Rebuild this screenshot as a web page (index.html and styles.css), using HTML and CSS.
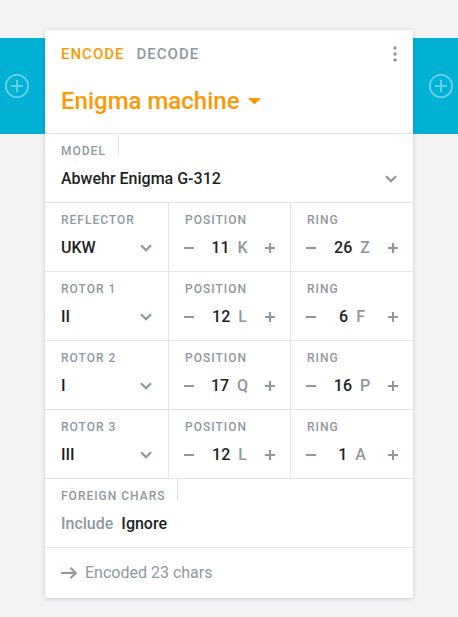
FILE: index.html
```html
<!DOCTYPE html>
<html lang="en">
<head>
<meta charset="utf-8">
<title>Enigma machine</title>
<link rel="stylesheet" href="styles.css">
</head>
<body>
<svg class="defs" width="0" height="0">
  <symbol id="add" viewBox="0 0 24 24"><circle cx="12" cy="12" r="11.2"/><path d="M12 6v12M6 12h12"/></symbol>
  <symbol id="chevron" viewBox="0 0 12 8"><path d="M1 1.2l5 5 5-5"/></symbol>
  <symbol id="minus" viewBox="0 0 10 10"><path d="M0 5h10"/></symbol>
  <symbol id="plus" viewBox="0 0 10 10"><path d="M0 5h10M5 0v10"/></symbol>
</svg>
<div class="pipe">
  <div class="gutter"><svg class="add"><use href="#add"/></svg></div>
  <main class="card">
    <header class="head">
      <nav class="tabs">
        <span class="tab active">ENCODE</span><span class="tab">DECODE</span>
        <svg class="more" viewBox="0 0 4 16"><circle cx="2" cy="2" r="1.8"/><circle cx="2" cy="8" r="1.8"/><circle cx="2" cy="14" r="1.8"/></svg>
      </nav>
      <h1 class="title">Enigma machine<svg class="caret" viewBox="0 0 13 7"><path d="M0 0h13L6.500 6.500z"/></svg></h1>
    </header>
    <section class="row">
      <div class="field"><span class="label ticked">MODEL</span><div class="select">Abwehr Enigma G-312<svg class="chevron"><use href="#chevron"/></svg></div></div>
    </section>
    <section class="row">
      <div class="field"><span class="label">REFLECTOR</span><div class="select">UKW<svg class="chevron"><use href="#chevron"/></svg></div></div>
      <div class="field"><span class="label">POSITION</span><div class="stepper"><svg class="step"><use href="#minus"/></svg><span class="value">11<i>K</i></span><svg class="step"><use href="#plus"/></svg></div></div>
      <div class="field"><span class="label">RING</span><div class="stepper"><svg class="step"><use href="#minus"/></svg><span class="value">26<i>Z</i></span><svg class="step"><use href="#plus"/></svg></div></div>
    </section>
    <section class="row">
      <div class="field"><span class="label">ROTOR 1</span><div class="select">II<svg class="chevron"><use href="#chevron"/></svg></div></div>
      <div class="field"><span class="label">POSITION</span><div class="stepper"><svg class="step"><use href="#minus"/></svg><span class="value">12<i>L</i></span><svg class="step"><use href="#plus"/></svg></div></div>
      <div class="field"><span class="label">RING</span><div class="stepper"><svg class="step"><use href="#minus"/></svg><span class="value">6<i>F</i></span><svg class="step"><use href="#plus"/></svg></div></div>
    </section>
    <section class="row">
      <div class="field"><span class="label">ROTOR 2</span><div class="select">I<svg class="chevron"><use href="#chevron"/></svg></div></div>
      <div class="field"><span class="label">POSITION</span><div class="stepper"><svg class="step"><use href="#minus"/></svg><span class="value">17<i>Q</i></span><svg class="step"><use href="#plus"/></svg></div></div>
      <div class="field"><span class="label">RING</span><div class="stepper"><svg class="step"><use href="#minus"/></svg><span class="value">16<i>P</i></span><svg class="step"><use href="#plus"/></svg></div></div>
    </section>
    <section class="row">
      <div class="field"><span class="label">ROTOR 3</span><div class="select">III<svg class="chevron"><use href="#chevron"/></svg></div></div>
      <div class="field"><span class="label">POSITION</span><div class="stepper"><svg class="step"><use href="#minus"/></svg><span class="value">12<i>L</i></span><svg class="step"><use href="#plus"/></svg></div></div>
      <div class="field"><span class="label">RING</span><div class="stepper"><svg class="step"><use href="#minus"/></svg><span class="value">1<i>A</i></span><svg class="step"><use href="#plus"/></svg></div></div>
    </section>
    <section class="row">
      <div class="field"><span class="label ticked">FOREIGN CHARS</span><div class="choices"><span class="muted">Include</span><span>Ignore</span></div></div>
    </section>
    <footer class="foot"><svg class="arrow" viewBox="0 0 16 12"><path d="M0 6h15M9.500 0.800L14.700 6l-5.200 5.200"/></svg>Encoded 23 chars</footer>
  </main>
  <div class="gutter"><svg class="add"><use href="#add"/></svg></div>
</div>
</body>
</html>
```
FILE: styles.css
```css
* { box-sizing: border-box; }
body {
  margin: 0;
  min-height: 100vh;
  background: #f2f3f5;
  color: #1c1f22;
  font: 16px/24px Roboto, "Liberation Sans", sans-serif;
}
svg { display: block; flex: none; }
.defs { position: absolute; }
.pipe { display: flex; align-items: flex-start; padding: 30px 0 19px; }
.gutter {
  flex: 0 0 45px;
  height: 96px;
  margin-top: 8px;
  padding-left: 5px;
  display: flex;
  align-items: center;
  background: #00b1d4;
}
.gutter:last-child { padding-left: 16px; }
.add { width: 24px; height: 24px; fill: none; stroke: #66d0e5; stroke-width: 1.9; }
.card {
  flex: 0 0 368px;
  height: 568px;
  background: #fff;
  border-radius: 2px;
  box-shadow: 0 1px 4px rgba(33, 37, 41, .2);
  position: relative;
}
.head { height: 103px; padding: 12px 16px 0; }
.tabs {
  display: flex;
  align-items: center;
  gap: 12px;
  height: 24px;
  font-size: 15px;
  font-weight: 500;
  letter-spacing: 1px;
  color: #8e989f;
}
.active { color: #ff9800; }
.more { width: 4px; height: 16px; margin: 0 0 0 auto; fill: #8e989f; }
.title {
  display: flex;
  align-items: center;
  margin: 19px 0 0;
  font-size: 24px;
  line-height: 32px;
  font-weight: 500;
  color: #ff9800;
}
.caret { width: 13px; height: 7px; margin-left: 8px; fill: #ff9800; }
.row { display: flex; height: 69px; border-top: 1px solid #e1e5e9; }
.field { flex: 1; padding: 0 16px; }
.field + .field { border-left: 1px solid #e1e5e9; flex: 0 0 122px; }
.field + .field + .field { flex-basis: 123px; }
.label {
  display: block;
  height: 33px;
  line-height: 34px;
  font-size: 12px;
  font-weight: 500;
  letter-spacing: 1px;
  color: #8e989f;
}
.ticked {
  width: fit-content;
  height: 22px;
  margin-bottom: 11px;
  padding-right: 11.8px;
  border-right: 1px solid #e1e5e9;
}
.select { display: flex; align-items: center; justify-content: space-between; font-weight: 500; }
.chevron { width: 12px; height: 8px; fill: none; stroke: #8e989f; stroke-width: 2.3; }
.stepper { display: flex; align-items: center; margin: 0 -1px; font-weight: 500; }
.step { width: 10px; height: 10px; fill: none; stroke: #8e989f; stroke-width: 2; }
.value { flex: 1; text-align: center; }
.value i { font-style: normal; color: #8e989f; margin-left: 8px; }
.choices { display: flex; gap: 8px; font-weight: 500; }
.muted { color: #8e989f; }
.foot {
  display: flex;
  align-items: center;
  gap: 8px;
  height: 51px;
  padding: 0 16px;
  border-top: 1px solid #e1e5e9;
  color: #8e989f;
}
.arrow { width: 16px; height: 12px; fill: none; stroke: #8e989f; stroke-width: 2.2; }
```
